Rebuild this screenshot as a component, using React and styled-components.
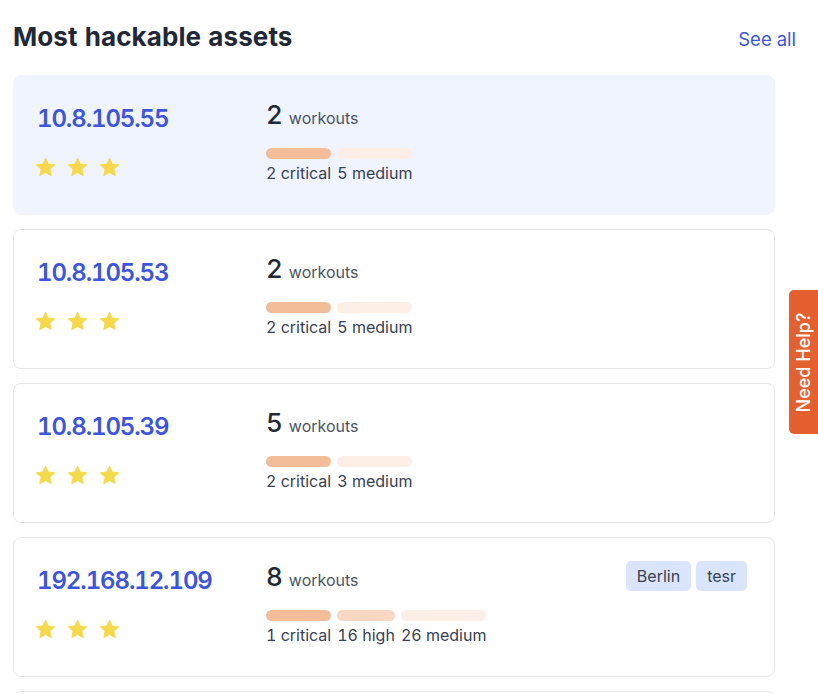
import React from "react";
import styled, { createGlobalStyle } from "styled-components";

const GlobalStyle = createGlobalStyle`
  body {
    margin: 0;
    font-family: Inter, "Noto Sans", "Liberation Sans", sans-serif;
    font-variant-numeric: tabular-nums;
    background: #fff;
    color: #1f2937;
  }
`;

const assets = [
  { ip: "10.8.105.55", workouts: 2, active: true, stats: [["critical", 2], ["medium", 5]] },
  { ip: "10.8.105.53", workouts: 2, stats: [["critical", 2], ["medium", 5]] },
  { ip: "10.8.105.39", workouts: 5, stats: [["critical", 2], ["medium", 3]] },
  { ip: "192.168.12.109", workouts: 8, tags: ["Berlin", "tesr"], stats: [["critical", 1], ["high", 16], ["medium", 26]] },
  { ip: "10.8.105.12", workouts: 3, stats: [["critical", 1], ["medium", 2]] },
];

const barColors = {
  critical: "#f4bd9a",
  high: "#f9d7c2",
  medium: "#fdefe6",
};

function StarIcon() {
  return (
    <svg width="21" height="20" viewBox="0 0 24 23">
      <path
        d="M12 1.2l3.2 6.9 7.5.9-5.6 5.1 1.5 7.4L12 17.8l-6.6 3.7 1.5-7.4L1.3 9l7.5-.9z"
        fill="#f6d94a"
        stroke="#f6d94a"
        strokeWidth="1"
        strokeLinejoin="round"
      />
    </svg>
  );
}

export default function App() {
  return (
    <>
      <GlobalStyle />
      <Page>
        <Header>
          <Title>Most hackable assets</Title>
          <SeeAll href="#">See all</SeeAll>
        </Header>
        <List>
          {assets.map((a) => (
            <Card key={a.ip} $active={a.active}>
              <LeftCol>
                <Ip>{a.ip}</Ip>
                <Stars>
                  <StarIcon />
                  <StarIcon />
                  <StarIcon />
                </Stars>
              </LeftCol>
              <MidCol>
                <WorkoutRow>
                  <Count>{a.workouts}</Count>
                  <WorkoutLabel>workouts</WorkoutLabel>
                </WorkoutRow>
                <Segments>
                  {a.stats.map(([level, n]) => (
                    <Segment key={level}>
                      <Bar $color={barColors[level]} />
                      <SegLabel>
                        {n} {level}
                      </SegLabel>
                    </Segment>
                  ))}
                </Segments>
              </MidCol>
              <Tags>
                {(a.tags || []).map((t) => (
                  <Tag key={t}>{t}</Tag>
                ))}
              </Tags>
            </Card>
          ))}
        </List>
      </Page>
      <HelpTab>
        <span>Need Help?</span>
      </HelpTab>
    </>
  );
}

const Page = styled.div`
  padding: 21px 0 0 13px;
  width: 783px;
`;

const Header = styled.div`
  display: flex;
  align-items: center;
  justify-content: space-between;
  height: 32px;
  margin-bottom: 22px;
`;

const Title = styled.h2`
  margin: 0;
  font-size: 26px;
  line-height: 32px;
  font-weight: 700;
  letter-spacing: 0.1px;
  color: #1f2937;
`;

const SeeAll = styled.a`
  font-size: 18.5px;
  color: #3b55e0;
  text-decoration: none;
  margin-top: 4px;
`;

const List = styled.div`
  display: flex;
  flex-direction: column;
  gap: 14px;
  width: 762px;
`;

const Card = styled.div`
  box-sizing: border-box;
  height: 140px;
  display: flex;
  padding: 24px 27px 24px 23px;
  border-radius: 8px;
  border: 1px solid ${(p) => (p.$active ? "#eff4fe" : "#e5e7eb")};
  background: ${(p) => (p.$active ? "#eff4fe" : "#fff")};
`;

const LeftCol = styled.div`
  width: 229px;
  display: flex;
  flex-direction: column;
`;

const Ip = styled.div`
  margin-top: 5px;
  font-size: 24px;
  line-height: 28px;
  font-weight: 600;
  color: #3b55e0;
  letter-spacing: -1.1px;
`;

const Stars = styled.div`
  display: flex;
  gap: 11px;
  margin-top: 24px;
  margin-left: -2px;
`;

const MidCol = styled.div`
  flex: 1;
  display: flex;
  flex-direction: column;
`;

const WorkoutRow = styled.div`
  display: flex;
  align-items: baseline;
  gap: 6px;
  height: 30px;
`;

const Count = styled.span`
  font-size: 26px;
  line-height: 30px;
  font-weight: 500;
  color: #1f2937;
`;

const WorkoutLabel = styled.span`
  font-size: 16px;
  color: #4b5563;
`;

const Segments = styled.div`
  display: flex;
  gap: 6px;
  margin-top: 18px;
`;

const Segment = styled.div`
  display: flex;
  flex-direction: column;
`;

const Bar = styled.div`
  height: 11px;
  border-radius: 6px;
  background: ${(p) => p.$color};
`;

const SegLabel = styled.span`
  margin-top: 4px;
  font-size: 16px;
  line-height: 20px;
  color: #374151;
  white-space: nowrap;
`;

const Tags = styled.div`
  display: flex;
  gap: 5px;
  align-self: flex-start;
`;

const Tag = styled.span`
  height: 30px;
  padding: 0 11px;
  display: flex;
  align-items: center;
  border-radius: 5px;
  background: #dae4fb;
  color: #374151;
  font-size: 16px;
  margin-top: -1px;
`;

const HelpTab = styled.div`
  position: fixed;
  right: 0;
  top: 290px;
  width: 29px;
  height: 144px;
  background: #e4602f;
  border-radius: 5px 0 0 5px;
  display: flex;
  align-items: center;
  justify-content: center;

  span {
    transform: rotate(-90deg);
    white-space: nowrap;
    color: #fff;
    font-size: 18px;
    font-weight: 500;
  }
`;
